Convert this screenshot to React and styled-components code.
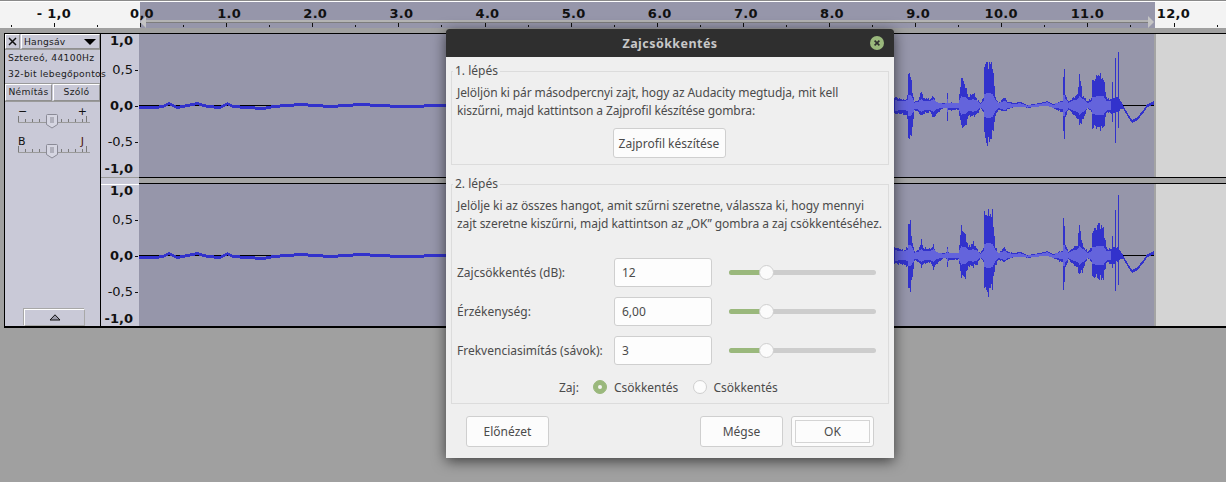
import { useMemo } from 'react';
import styled, { createGlobalStyle } from 'styled-components';

const GlobalStyle = createGlobalStyle`
  html, body {
    margin: 0;
    padding: 0;
    height: 100%;
    background: #a0a0a0;
    overflow: hidden;
  }
`;

const Page = styled.div`
  position: relative;
  width: 1226px;
  height: 482px;
  overflow: hidden;
  background: #a0a0a0;
  font-family: 'DejaVu Sans', sans-serif;
`;

const Ruler = styled.div`
  position: relative;
  display: flex;
  height: 26px;
  margin-top: 1px;
  overflow: hidden;
  background: linear-gradient(
    to right,
    #f3f3f3 140px,
    #9696aa 140px,
    #9696aa 1155px,
    #f3f3f3 1155px
  );
  border-top: 1px solid #fff;
  box-shadow: 0 -1px 0 #8a8a8a;
`;

const ScrubBar = styled.div`
  position: absolute;
  left: 145px;
  top: 18px;
  width: 1004px;
  height: 2px;
  background: #b4b4b4;
  border-bottom: 1px solid #7d7d7d;
`;

const Handle = styled.div`
  position: absolute;
  top: 14px;
  left: ${(p) => p.$left}px;
  width: 0;
  height: 0;
  border-top: 6px solid transparent;
  border-bottom: 6px solid transparent;
  ${(p) =>
    p.$flip
      ? 'border-left: 6px solid #c4c4c4;'
      : 'border-right: 6px solid #c4c4c4;'}
`;

const RulerCell = styled.div`
  position: relative;
  flex: 0 0 86.13px;
  &:first-child {
    margin-left: -32.26px;
  }
  &::before {
    content: '';
    position: absolute;
    left: 0;
    bottom: 1px;
    width: 1px;
    height: 4px;
    background: #111;
  }
  &::after {
    content: '';
    position: absolute;
    left: 43px;
    bottom: 1px;
    width: 1px;
    height: 2px;
    background: #111;
  }
`;

const RulerLabel = styled.span`
  position: absolute;
  top: 4px;
  left: ${(p) => p.$shift}px;
  transform: translateX(-50%);
  font-size: 13px;
  line-height: 16px;
  font-weight: 700;
  white-space: nowrap;
  color: #111;
  letter-spacing: 0.3px;
`;

const Tracks = styled.div`
  display: grid;
  grid-template-columns: 95px 1fr;
  height: 295px;
  margin: 5px 0 0 4px;
  border-top: 1px solid #000;
  border-bottom: 2px solid #000;
  border-left: 1px solid #000;
  box-sizing: border-box;
`;

const ControlPanel = styled.div`
  position: relative;
  z-index: 1;
  display: flex;
  flex-direction: column;
  width: 95px;
  background: #c9c9d7;
  font-size: 9.2px;
  color: #1c1c1c;
`;

const TitleRow = styled.div`
  display: flex;
  height: 16px;
  border-bottom: 1px solid #9a9a9a;
  box-sizing: border-box;
`;

const CloseBox = styled.div`
  display: grid;
  place-items: center;
  width: 15px;
  border: 1px solid #fff;
  border-right-color: #909090;
  border-bottom-color: #909090;
  box-sizing: border-box;
  margin-right: 1px;
`;

const TrackName = styled.div`
  flex: 1;
  display: flex;
  align-items: center;
  justify-content: space-between;
  padding: 0 3px 0 2px;
  border: 1px solid #fff;
  border-right-color: #909090;
  border-bottom-color: #909090;
  letter-spacing: 0.2px;
  &::after {
    content: '';
    border-left: 6px solid transparent;
    border-right: 6px solid transparent;
    border-top: 6px solid #000;
  }
`;

const InfoLine = styled.div`
  height: 16px;
  line-height: 16px;
  padding-left: 3px;
  white-space: nowrap;
  letter-spacing: 0.3px;
`;

const ToggleRow = styled.div`
  display: flex;
  gap: 1px;
  height: 17px;
  margin-top: 1px;
  border-top: 1px solid #9a9a9a;
  border-bottom: 1px solid #9a9a9a;
`;

const ToggleButton = styled.div`
  flex: 1;
  text-align: center;
  line-height: 14px;
  border: 1px solid #fff;
  border-right-color: #909090;
  border-bottom-color: #909090;
  letter-spacing: 0.3px;
`;

const GainBlock = styled.div`
  display: flex;
  flex-direction: column;
  width: 73px;
  height: 27px;
  margin: ${(p) => p.$mt}px 0 0 13px;
`;

const GainLabels = styled.div`
  display: flex;
  justify-content: space-between;
  height: 7px;
  padding-right: ${(p) => p.$pr}px;
  line-height: 10px;
  font-size: 11px;
  color: #111;
`;

const PanRight = styled.span`
  color: #4a1410;
`;

const CollapseButton = styled.div`
  display: grid;
  place-items: center;
  width: 61px;
  height: 17px;
  margin: auto 0 0 19px;
  border: 1px solid #a8a8a8;
  border-top-color: #fff;
  border-left-color: #fff;
  box-sizing: border-box;
  box-shadow: -1px -1px 0 #a8a8a8;
`;

const TrackStack = styled.div`
  display: flex;
  flex-direction: column;
`;

const Channel = styled.div`
  display: flex;
  height: ${(p) => p.$h}px;
  border-left: 1px solid #000;
`;

const AmpRuler = styled.div`
  display: flex;
  flex-direction: column;
  align-items: flex-end;
  width: 38px;
  background: #c9c9d7;
  box-sizing: border-box;
  ${(p) => p.$second && 'box-shadow: inset 0 1px 0 #fff;'}
`;

const AmpLabel = styled.div`
  position: relative;
  height: 14px;
  line-height: 14px;
  margin-top: ${(p) => p.$mt}px;
  padding-right: 6px;
  font-size: 13px;
  font-weight: ${(p) => (p.$bold ? 700 : 400)};
  color: #111;
  &::after {
    content: '';
    display: ${(p) => (p.$tick ? 'block' : 'none')};
    position: absolute;
    right: 1px;
    top: 7px;
    width: 3px;
    height: 1px;
    background: #111;
  }
`;

const WaveArea = styled.div`
  flex: 1;
  display: flex;
  min-width: 0;
`;

const WaveBox = styled.div`
  flex: 0 0 1017px;
  background: #9696aa;
  border-right: 2px solid #a4a4a4;
  box-sizing: border-box;
`;

const WaveSvg = styled.svg`
  display: block;
`;

const Blank = styled.div`
  flex: 1;
  background: #d4d4d4;
`;

const Gutter = styled.div`
  display: flex;
  flex: 0 0 7px;
  border-left: 1px solid #000;
`;

const GutterRuler = styled.div`
  flex: 0 0 38px;
  background: #c9c9d7;
  border-top: 1px solid #9a9a9a;
  box-sizing: border-box;
`;

const GutterBand = styled.div`
  flex: 1;
  background: #a4a4a4;
  border-top: 1px solid #000;
  border-bottom: 1px solid #000;
`;

const Dialog = styled.div`
  position: absolute;
  left: 446px;
  top: 29px;
  width: 448px;
  height: 429px;
  display: flex;
  flex-direction: column;
  background: #efefef;
  border-radius: 3px 3px 0 0;
  box-shadow: 0 3px 14px rgba(0, 0, 0, 0.62);
  font-family: 'Noto Sans', sans-serif;
  font-size: 12px;
  color: #4b4b4b;
`;

const TitleBar = styled.div`
  position: relative;
  flex: 0 0 28px;
  display: grid;
  place-items: center;
  background: #2f2f2f;
  border-radius: 3px 3px 0 0;
  color: #c8c8c8;
  font-size: 12.5px;
  font-weight: 700;
  letter-spacing: 0.45px;
`;

const CloseIcon = styled.svg`
  position: absolute;
  right: 10px;
  top: 7px;
`;

const DialogBody = styled.div`
  display: flex;
  flex-direction: column;
  gap: 10px;
  padding: 5px 5px 0;
`;

const Group = styled.fieldset`
  margin: 0;
  min-width: 0;
  padding: 4px 5px ${(p) => p.$pb}px;
  border: 1px solid #dcdcdc;
  box-sizing: border-box;
`;

const Legend = styled.legend`
  margin-left: -4px;
  padding: 0 2px;
  line-height: 18px;
`;

const Para = styled.p`
  margin: 0;
  line-height: 18px;
  white-space: nowrap;
  letter-spacing: ${(p) => p.$ls}px;
`;

const Center = styled.div`
  display: flex;
  justify-content: center;
  margin-top: 8px;
  padding-right: 2px;
`;

const Button = styled.button`
  width: ${(p) => p.$w}px;
  height: ${(p) => p.$h}px;
  padding: 0;
  background: #fcfcfc;
  border: 1px solid #cfcfcf;
  border-radius: 3px;
  font: inherit;
  color: inherit;
  ${(p) => p.$primary && 'outline: 1px solid #d4d4d4; outline-offset: -5px;'}
`;

const FieldList = styled.div`
  display: flex;
  flex-direction: column;
  gap: 10px;
  margin-top: 25px;
`;

const FieldRow = styled.div`
  display: grid;
  grid-template-columns: 157px 98px 147px;
  align-items: center;
  height: 29px;
`;

const FieldLabel = styled.span`
  white-space: nowrap;
`;

const ValueBox = styled.div`
  height: 29px;
  line-height: 27px;
  padding-left: 7px;
  background: #fdfdfd;
  border: 1px solid #cfcfcf;
  border-radius: 3px;
  box-sizing: border-box;
`;

const SliderTrack = styled.div`
  position: relative;
  width: 147px;
  height: 5px;
  margin-left: 17px;
  background: #cdcdcd;
  border-radius: 3px;
`;

const SliderFill = styled.div`
  width: 33px;
  height: 100%;
  background: #9ab87c;
  border-radius: 3px 0 0 3px;
`;

const SliderKnob = styled.div`
  position: absolute;
  left: 30px;
  top: -5px;
  width: 15px;
  height: 15px;
  background: #fbfbfb;
  border: 1px solid #cfcfcf;
  border-radius: 50%;
  box-sizing: border-box;
`;

const RadioRow = styled.div`
  display: flex;
  align-items: center;
  height: 18px;
  margin: 13px 0 0 102px;
`;

const RadioDot = styled.span`
  flex: 0 0 14px;
  width: 14px;
  height: 14px;
  margin: ${(p) => p.$margin};
  box-sizing: border-box;
  border-radius: 50%;
  background: ${(p) => (p.$on ? '#9ab87c' : '#fcfcfc')};
  border: 1px solid ${(p) => (p.$on ? '#9ab87c' : '#cfcfcf')};
  display: grid;
  place-items: center;
  &::after {
    content: '';
    display: ${(p) => (p.$on ? 'block' : 'none')};
    width: 4px;
    height: 4px;
    border-radius: 50%;
    background: #f4f4f4;
  }
`;

const Footer = styled.div`
  display: flex;
  gap: 8px;
  margin-top: 12px;
  padding: 0 20px;
`;

const Spacer = styled.div`
  flex: 1;
`;

const RULER_TICKS = [
  { text: '', shift: 0 },
  { text: '- 1,0', shift: 0 },
  { text: '0,0', shift: 2 },
  { text: '1.0', shift: 3 },
  { text: '2.0', shift: 3 },
  { text: '3.0', shift: 3 },
  { text: '4.0', shift: 3 },
  { text: '5.0', shift: 3 },
  { text: '6.0', shift: 3 },
  { text: '7.0', shift: 3 },
  { text: '8.0', shift: 3 },
  { text: '9.0', shift: 3 },
  { text: '10.0', shift: 0 },
  { text: '11.0', shift: 0 },
  { text: '12,0', shift: 0 },
];

const AMP_LABELS = [
  { text: '1,0', bold: true, mt: 0 },
  { text: '0,5', tick: true, mt: 15 },
  { text: '0,0', bold: true, tick: true, mt: 22 },
  { text: '-0,5', tick: true, mt: 22 },
  { text: '-1,0', bold: true, mt: 13 },
];

// [x, top, bottom] relative to the zero line, read off the picture
const PEAKS = [
  [894, -9, 10], [900, -7, 10], [905, -6, 11], [907, -10, 14], [908, -36, 38], [910, -36, 38], [912, -15, 25],
  [914, -4, 6], [918, -6, 8], [921, -16, 13], [923, -8, 10], [930, -7, 8], [933, -11, 15],
  [936, -2, 10], [943, -2, 3], [946, -3, 4], [947, -12, 16], [948, -3, 6], [958, -2, 5], [961, -32, 25],
  [965, -22, 25], [968, -9, 12], [973, -14, 13], [977, -6, 10], [980, -2, 3], [983, -8, 8], [984, -46, 35],
  [987, -47, 45], [992, -46, 35], [995, -9, 12], [998, -2, 5], [1004, -9, 8], [1007, -4, 5],
  [1013, -2, 2], [1020, -3, 2], [1027, 0, 2], [1033, -1, 2], [1040, -2, 1], [1047, -4, 1],
  [1053, -1, 3], [1061, -5, 8], [1062, -5, 8], [1063, -37, 35], [1064, -37, 35], [1065, -12, 14], [1068, -4, 5],
  [1077, -12, 15], [1079, -34, 23], [1082, -12, 18], [1087, -4, 3], [1091, -8, 8], [1092, -27, 26],
  [1095, -30, 25], [1098, -35, 27], [1103, -30, 27], [1106, -9, 9], [1107, -7, 8], [1111, -7, 10],
  [1112, -24, 18], [1113, -9, 10], [1114, -9, 10], [1115, -52, 43], [1116, -9, 8], [1117, -9, 8],
  [1118, -62, 32], [1119, -6, 6], [1120, -5, 5], [1123, 1, 3], [1128, 10, 12], [1132, 15, 17], [1137, 12, 14],
  [1142, 6, 8], [1147, -1, 1], [1153, -4, 0],
];

const QUIET = [
  [139, 1, 3], [153, 1, 3], [163, 0, 2], [168, -3, -1], [177, 1, 3], [187, -1, 1], [197, -3, -1],
  [207, 0, 2], [220, 1, 3], [227, -3, -1], [233, 0, 2], [247, 1, 3], [263, 2, 4], [273, 0, 2],
  [300, -2, 0], [330, 0, 2], [360, -2, 1], [400, 0, 2], [446, -1, 1],
];

const lookup = (table, x) => {
  let i = 0;
  while (i < table.length - 2 && table[i + 1][0] < x) i += 1;
  const [x0, t0, b0] = table[i];
  const [x1, t1, b1] = table[i + 1];
  const k = Math.min(1, Math.max(0, (x - x0) / (x1 - x0)));
  return [t0 + (t1 - t0) * k, b0 + (b1 - b0) * k];
};

const WaveForm = ({ height, zero, seed }) => {
  const { peaks, rms } = useMemo(() => {
    let peakPath = '';
    let rmsPath = '';
    const add = (table, from, to) => {
      for (let x = from; x <= to; x += 1) {
        const [t, b] = lookup(table, x);
        const jitter = 0.87 + 0.13 * Math.sin(x * 2.3 + seed) * Math.cos(x * 0.7);
        const spread = Math.abs(b - t) > 6 ? jitter : 1;
        const mid = (t + b) / 2;
        const top = Math.round(zero + mid + (t - mid) * spread);
        const bot = Math.round(zero + mid + (b - mid) * spread);
        const px = x - 139;
        peakPath += `M${px} ${top}V${Math.max(bot, top + 3)}`;
        const half = Math.abs(b - t) / 2;
        if (x < 1111 && x > 894) {
          const r = half < 10 ? half * 0.5 : 5 + (half - 10) * 0.2;
          const center = half < 3 ? zero + mid : zero;
          rmsPath += `M${px} ${Math.round(center - r)}V${Math.round(center + r + 1)}`;
        }
      }
    };
    add(QUIET, 139, 446);
    add(PEAKS, 894, 1153);
    return { peaks: peakPath, rms: rmsPath };
  }, [zero, seed]);

  return (
    <WaveSvg width="1015" height={height} shapeRendering="crispEdges">
      <rect x="0" y={zero} width="1015" height="1" fill="#000" />
      <path d={peaks} stroke="#3232cc" strokeWidth="1" fill="none" transform="translate(0.5 0)" />
      <path d={rms} stroke="#6464dc" strokeWidth="1" fill="none" transform="translate(0.5 0)" />
    </WaveSvg>
  );
};

const MiniSlider = () => (
  <svg width="73" height="20" viewBox="0 -3 73 20">
    <path d="M0.5 -1v6M7.5 2v3M14.5 2v3M21.5 2v3M43.5 2v3M50.5 2v3M57.5 2v3M64.5 2v3M68.5 -1v6" stroke="#7a7a7a" fill="none" />
    <rect x="0" y="5" width="72" height="1" fill="#9a9a9a" />
    <path d="M29.5 -2.5h9a1 1 0 0 1 1 1v9l-5.5 3.5l-5.5-3.5v-9a1 1 0 0 1 1-1z" fill="#d6d6e2" stroke="#8a8a96" />
    <path d="M32 1h4M32 3h4M32 5h4" stroke="#8a8a96" fill="none" />
  </svg>
);

const Channelstrip = ({ height, zero, seed, second }) => (
  <Channel $h={height}>
    <AmpRuler $second={second}>
      {AMP_LABELS.map((l) => (
        <AmpLabel key={l.text} $bold={l.bold} $tick={l.tick} $mt={l.mt}>
          {l.text}
        </AmpLabel>
      ))}
    </AmpRuler>
    <WaveArea>
      <WaveBox>
        <WaveForm height={height} zero={zero} seed={seed} />
      </WaveBox>
      <Blank />
    </WaveArea>
  </Channel>
);

const App = () => (
  <Page>
    <GlobalStyle />
    <Ruler>
      {RULER_TICKS.map((t) => (
        <RulerCell key={t.text}>
          <RulerLabel $shift={t.shift}>{t.text}</RulerLabel>
        </RulerCell>
      ))}
      <ScrubBar />
      <Handle $left={140} />
      <Handle $left={1148} $flip />
    </Ruler>

    <Tracks>
      <ControlPanel>
        <TitleRow>
          <CloseBox>
            <svg width="9" height="9" viewBox="0 0 9 9">
              <path d="M1 1l7 7M8 1l-7 7" stroke="#111" strokeWidth="1.5" fill="none" />
            </svg>
          </CloseBox>
          <TrackName>Hangsáv</TrackName>
        </TitleRow>
        <InfoLine>Sztereó, 44100Hz</InfoLine>
        <InfoLine>32-bit lebegőpontos</InfoLine>
        <ToggleRow>
          <ToggleButton>Némítás</ToggleButton>
          <ToggleButton>Szóló</ToggleButton>
        </ToggleRow>
        <GainBlock $mt={5}>
          <GainLabels $pr={4}>
            <span>−</span>
            <span>+</span>
          </GainLabels>
          <MiniSlider />
        </GainBlock>
        <GainBlock $mt={3}>
          <GainLabels $pr={7}>
            <span>B</span>
            <PanRight>J</PanRight>
          </GainLabels>
          <MiniSlider />
        </GainBlock>
        <CollapseButton>
          <svg width="12" height="7" viewBox="0 0 12 7">
            <path d="M6 0.8L11 6H1z" fill="#9b9bab" stroke="#111" />
          </svg>
        </CollapseButton>
      </ControlPanel>

      <TrackStack>
        <Channelstrip height={143} zero={71} seed={1} />
        <Gutter>
          <GutterRuler />
          <GutterBand />
        </Gutter>
        <Channelstrip height={142} zero={71} seed={4} second />
      </TrackStack>
    </Tracks>

    <Dialog>
      <TitleBar>
        Zajcsökkentés
        <CloseIcon width="14" height="14" viewBox="0 0 14 14">
          <circle cx="7" cy="7" r="7" fill="#9ab87c" />
          <path d="M4.6 4.6l4.8 4.8M9.4 4.6l-4.8 4.8" stroke="#2f2f2f" strokeWidth="1.6" fill="none" />
        </CloseIcon>
      </TitleBar>

      <DialogBody>
        <Group $pb={6}>
          <Legend>1. lépés</Legend>
          <Para $ls={-0.1}>
            Jelöljön ki pár másodpercnyi zajt, hogy az Audacity megtudja, mit kell
            <br />
            kiszűrni, majd kattintson a Zajprofil készítése gombra:
          </Para>
          <Center>
            <Button $w={113} $h={30}>Zajprofil készítése</Button>
          </Center>
        </Group>

        <Group $pb={7}>
          <Legend>2. lépés</Legend>
          <Para $ls={-0.05}>
            Jelölje ki az összes hangot, amit szűrni szeretne, válassza ki, hogy mennyi
            <br />
            zajt szeretne kiszűrni, majd kattintson az „OK” gombra a zaj csökkentéséhez.
          </Para>
          <FieldList>
            {[
              ['Zajcsökkentés (dB):', '12'],
              ['Érzékenység:', '6,00'],
              ['Frekvenciasimítás (sávok):', '3'],
            ].map(([label, value]) => (
              <FieldRow key={label}>
                <FieldLabel>{label}</FieldLabel>
                <ValueBox>{value}</ValueBox>
                <SliderTrack>
                  <SliderFill />
                  <SliderKnob />
                </SliderTrack>
              </FieldRow>
            ))}
          </FieldList>
          <RadioRow>
            <span>Zaj:</span>
            <RadioDot $on $margin="0 7px 0 14px" />
            <span>Csökkentés</span>
            <RadioDot $margin="0 6px 0 15px" />
            <span>Csökkentés</span>
          </RadioRow>
        </Group>
      </DialogBody>

      <Footer>
        <Button $w={83} $h={31}>Előnézet</Button>
        <Spacer />
        <Button $w={83} $h={31}>Mégse</Button>
        <Button $w={83} $h={31} $primary>OK</Button>
      </Footer>
    </Dialog>
  </Page>
);

export default App;
